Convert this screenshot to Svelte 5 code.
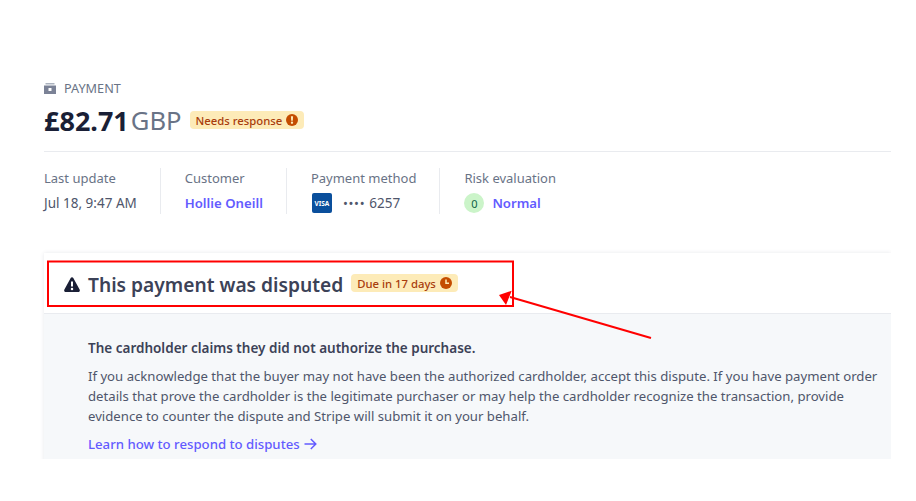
<script>
  const details = `If you acknowledge that the buyer may not have been the authorized cardholder, accept this dispute. If you have payment order details that prove the cardholder is the legitimate purchaser or may help the cardholder recognize the transaction, provide evidence to counter the dispute and Stripe will submit it on your behalf.`
</script>

<div class="page">
  <header class="head">
    <div class="kicker">
      <svg width="12" height="11" viewBox="0 0 12 11">
        <path fill="#8792a2" d="M1.500 0h9v1.500h-9z" opacity=".7" />
        <path fill="#7b8296" fill-rule="evenodd" d="M0 2.500h12V11H0zM4.500 5h3v3h-3z" />
      </svg>
      <span>PAYMENT</span>
    </div>
    <div class="amount-row">
      <span class="amount">£82.71</span>
      <span class="currency">GBP</span>
      <span class="badge needs">
        Needs response
        <svg width="12" height="12" viewBox="0 0 12 12">
          <circle cx="6" cy="6" r="6" fill="#c44c00" />
          <path d="M4.900 2.300h2.200l-.3 4.500H5.200zM6 7.600a1.150 1.150 0 1 1 0 2.300a1.150 1.150 0 0 1 0-2.300z" fill="#fdebb8" />
        </svg>
      </span>
    </div>
  </header>

  <div class="meta">
    <div class="cell first">
      <div class="label">Last update</div>
      <div class="value">Jul 18, 9:47 AM</div>
    </div>
    <div class="cell">
      <div class="label">Customer</div>
      <div class="value link strong">Hollie Oneill</div>
    </div>
    <div class="cell">
      <div class="label">Payment method</div>
      <div class="value card">
        <span class="visa">VISA</span>
        <span class="dots">••••</span>
        <span>6257</span>
      </div>
    </div>
    <div class="cell last">
      <div class="label">Risk evaluation</div>
      <div class="value risk">
        <span class="score">0</span>
        <span class="link strong">Normal</span>
      </div>
    </div>
  </div>

  <section class="dispute">
    <div class="dispute-head">
      <svg class="warn" width="16" height="15" viewBox="0 0 16 15">
        <path fill="#1a1f36" fill-rule="evenodd" d="M6.700 1.100a1.500 1.500 0 0 1 2.600 0l6.300 11.400A1.650 1.650 0 0 1 14.200 15H1.800A1.650 1.650 0 0 1 .4 12.500zM7 4.500h2v5H7zM8 10.700a1.250 1.250 0 1 1 0 2.500a1.250 1.250 0 0 1 0-2.500z" />
      </svg>
      <h2>This payment was disputed</h2>
      <span class="badge due">
        Due in 17 days
        <svg width="12" height="12" viewBox="0 0 12 12">
          <circle cx="6" cy="6" r="6" fill="#c44c00" />
          <path d="M6 2.600v3.600h3" fill="none" stroke="#fdebb8" stroke-width="1.500" />
        </svg>
      </span>
    </div>
    <div class="dispute-body">
      <p class="claim">The cardholder claims they did not authorize the purchase.</p>
      <p class="details">{details}</p>
      <div class="learn">
        Learn how to respond to disputes
        <svg width="13" height="12" viewBox="0 0 13 12">
          <path d="M.5 6h11M6.800 1l5 5-5 5" fill="none" stroke="#635bff" stroke-width="1.500" />
        </svg>
      </div>
    </div>
  </section>

  <!-- annotation drawn over the screenshot -->
  <svg class="annotation" width="891" height="459" viewBox="0 0 891 459">
    <rect x="48" y="261.500" width="465" height="44.500" fill="none" stroke="#f00" stroke-width="2" />
    <path d="M651 338 L510 297" stroke="#f00" stroke-width="2" fill="none" />
    <path d="M499 295 L511.700 290.700 L506 305 Z" fill="#f00" />
  </svg>
</div>

<style>
  :global(body) {
    margin: 0;
    background: #fff;
  }

  .page {
    position: relative;
    width: 891px;
    height: 459px;
    overflow: hidden;
    padding: 81px 0 0 44px;
    box-sizing: border-box;
    font-family: "Noto Sans", sans-serif;
    font-size: 13px;
    color: #4f566b;
  }

  .head {
    padding-bottom: 14px;
    border-bottom: 1px solid #e9ebef;
  }

  .kicker {
    display: flex;
    align-items: center;
    gap: 8px;
    height: 14px;
    font-size: 12.700px;
    line-height: 14px;
    color: #697386;
  }

  .amount-row {
    display: flex;
    align-items: center;
    height: 34px;
    margin-top: 8px;
  }

  .amount {
    font-size: 27px;
    font-weight: 700;
    color: #1a1f36;
  }

  .currency {
    font-size: 25.600px;
    color: #697386;
    margin-left: 2px;
  }

  .badge {
    display: inline-flex;
    align-items: center;
    gap: 4px;
    height: 18px;
    padding: 0 6px;
    border-radius: 4px;
    background: #fdebb8;
    color: #a83c0c;
    font-size: 11.300px;
    font-weight: 500;
    white-space: nowrap;
  }

  .needs {
    margin-left: 8px;
  }

  .meta {
    display: flex;
    margin-top: 16px;
  }

  .cell {
    height: 46px;
    padding: 0 23px 0 24px;
    border-right: 1px solid #e9ebef;
  }

  .cell.first {
    padding-left: 0;
  }

  .cell.last {
    border-right: none;
  }

  .label {
    height: 21px;
    line-height: 21px;
    color: #697386;
    font-size: 13px;
  }

  .value {
    display: flex;
    align-items: center;
    height: 20px;
    margin-top: 4px;
    font-size: 13.500px;
    color: #4f566b;
  }

  .link {
    color: #635bff;
  }

  .strong {
    font-size: 13.200px;
    font-weight: 600;
  }

  .card {
    gap: 11px;
  }

  .visa {
    display: flex;
    align-items: center;
    justify-content: center;
    width: 20px;
    height: 20px;
    margin-left: 1px;
    border-radius: 2px;
    background: #0a4f9c;
    color: #fff;
    font-size: 6.500px;
    font-weight: 700;
  }

  .dots {
    font-size: 13px;
    letter-spacing: 0.7px;
    margin-right: -7px;
  }

  .risk {
    gap: 8px;
  }

  .score {
    display: flex;
    align-items: center;
    justify-content: center;
    width: 20px;
    height: 20px;
    border-radius: 50%;
    background: #cbf4c9;
    color: #0e6245;
    font-size: 11px;
  }

  .dispute {
    margin-top: 39px;
    background: #fff;
    box-shadow: 0 0 4px rgba(60, 66, 87, 0.12);
  }

  .dispute-head {
    display: flex;
    align-items: center;
    height: 60px;
    padding-left: 20px;
    border-bottom: 1px solid #e9ebef;
  }

  .warn {
    margin-top: 2px;
  }

  h2 {
    margin: 2px 0 0 8px;
    font-size: 19.200px;
    font-weight: 600;
    color: #3c4257;
  }

  .due {
    margin-left: 8px;
  }

  .dispute-body {
    height: 146px;
    padding: 24px 12px 0 44px;
    background: #f6f8fa;
  }

  .claim {
    margin: 0;
    font-size: 13.500px;
    line-height: 20px;
    font-weight: 600;
    color: #3c4257;
  }

  .details {
    margin: 8px 0 0;
    font-size: 13.160px;
    line-height: 20px;
    color: #4f566b;
  }

  .learn {
    display: flex;
    align-items: center;
    gap: 4px;
    margin-top: 8px;
    font-size: 13.200px;
    line-height: 20px;
    font-weight: 500;
    color: #635bff;
  }

  .annotation {
    position: absolute;
    top: 0;
    left: 0;
    pointer-events: none;
  }
</style>
